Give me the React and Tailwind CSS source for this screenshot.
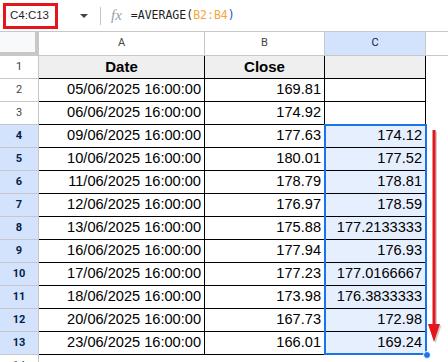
import React from "react";

const rows = [
  { n: 1, a: "Date", b: "Close", c: "", head: true },
  { n: 2, a: "05/06/2025 16:00:00", b: "169.81", c: "" },
  { n: 3, a: "06/06/2025 16:00:00", b: "174.92", c: "" },
  { n: 4, a: "09/06/2025 16:00:00", b: "177.63", c: "174.12" },
  { n: 5, a: "10/06/2025 16:00:00", b: "180.01", c: "177.52" },
  { n: 6, a: "11/06/2025 16:00:00", b: "178.79", c: "178.81" },
  { n: 7, a: "12/06/2025 16:00:00", b: "176.97", c: "178.59" },
  { n: 8, a: "13/06/2025 16:00:00", b: "175.88", c: "177.2133333" },
  { n: 9, a: "16/06/2025 16:00:00", b: "177.94", c: "176.93" },
  { n: 10, a: "17/06/2025 16:00:00", b: "177.23", c: "177.0166667" },
  { n: 11, a: "18/06/2025 16:00:00", b: "173.98", c: "176.3833333" },
  { n: 12, a: "20/06/2025 16:00:00", b: "167.73", c: "172.98" },
  { n: 13, a: "23/06/2025 16:00:00", b: "166.01", c: "169.24" },
];

const App = () => {
  return (
    <div className="relative w-[448px] h-[362px] overflow-hidden bg-white font-['Liberation_Sans',Arial,sans-serif] text-black">
      {/* formula bar */}
      <div className="flex items-center h-[32px] border-b border-[#c7c7c7] bg-white">
        <div className="ml-[3px] w-[55px] h-[26px] border-[3px] border-[#e3161b] bg-white flex items-center pl-[4px] text-[11.5px] text-[#1f1f1f]">
          C4:C13
        </div>
        <div className="ml-[22px] w-0 h-0 border-l-[4px] border-r-[4px] border-t-[4px] border-l-transparent border-r-transparent border-t-[#444]" />
        <div className="ml-[12px] w-px h-[18px] bg-[#c7c7c7]" />
        <div className="ml-[10px] text-[15px] italic text-[#9aa0a6] font-['Liberation_Serif',serif] leading-none">
          fx
        </div>
        <div className="ml-[9px] text-[11.5px] text-[#1f1f1f] font-['DejaVu_Sans_Mono',monospace]">
          =AVERAGE(<span className="text-[#f4a53d]">B2:B4</span>
          <span className="text-[#1a57b5]">)</span>
        </div>
      </div>

      {/* column headers */}
      <div className="flex h-[24px] font-['Roboto',sans-serif] text-[11px] text-[#444]">
        <div className="w-[39px] bg-[#f8f9fa] border-r-4 border-b-4 border-[#c7c7c7]" />
        <div className="w-[166px] flex items-center justify-center border-r border-b border-[#c7c7c7]">A</div>
        <div className="w-[120px] flex items-center justify-center border-r border-b border-[#c7c7c7]">B</div>
        <div className="w-[101px] flex items-center justify-center border-r border-b border-[#c7c7c7] bg-[#d3e3fd] text-[#041e49]">
          C
        </div>
        <div className="flex-1 border-b border-[#c7c7c7]" />
      </div>

      {/* rows */}
      {rows.map((r) => {
        const sel = r.n >= 4;
        return (
          <div key={r.n} className="flex h-[23px]">
            <div
              className={
                "w-[39px] flex items-center justify-center border-r border-b border-[#c7c7c7] font-['Roboto',sans-serif] text-[11px] " +
                (sel ? "bg-[#d3e3fd] text-[#041e49] font-bold" : "text-[#444]")
              }
            >
              {r.n}
            </div>
            {r.head ? (
              <>
                <div className="w-[166px] flex items-center justify-center bg-[#efefef] border-r border-b border-black text-[15px] font-bold">
                  {r.a}
                </div>
                <div className="w-[120px] flex items-center justify-center bg-[#efefef] border-r border-b border-black text-[15px] font-bold">
                  {r.b}
                </div>
                <div className="w-[101px] bg-[#efefef] border-r border-b border-black" />
              </>
            ) : (
              <>
                <div className="w-[166px] flex items-center justify-end pr-[3px] border-r border-b border-black text-[14.6px]">
                  {r.a}
                </div>
                <div className="w-[120px] flex items-center justify-end pr-[3px] border-r border-b border-black text-[14.6px]">
                  {r.b}
                </div>
                <div
                  className={
                    "w-[101px] flex items-center justify-end pr-[3px] border-r border-b border-black text-[14.6px] " +
                    (sel ? "bg-[#e6effd]" : "")
                  }
                >
                  {r.c}
                </div>
              </>
            )}
            <div className="flex-1" />
          </div>
        );
      })}
      <div className="flex h-[23px]">
        <div className="w-[39px] flex items-start pt-[3px] justify-center border-r border-[#c7c7c7] font-['Roboto',sans-serif] text-[11px] text-[#444]">
          14
        </div>
      </div>

      {/* selection outline */}
      <div className="absolute left-[324px] top-[124px] w-[103px] h-[231px] border-2 border-[#1a73e8] pointer-events-none" />
      <div className="absolute left-[423px] top-[351px] w-[8px] h-[8px] rounded-full bg-[#1a73e8] border border-white" />

      {/* red arrow */}
      <svg className="absolute left-[426px] top-[126px]" width="20" height="222" viewBox="0 0 20 222">
        <g transform="translate(1.5,1.5)" opacity="0.35">
          <rect x="6.5" y="4" width="3" height="198" fill="#777" />
          <polygon points="2,198 14,198 8,216" fill="#777" />
        </g>
        <rect x="6.5" y="4" width="3" height="198" fill="#e3161b" />
        <polygon points="2,198 14,198 8,216" fill="#e3161b" />
      </svg>
    </div>
  );
};

export default App;
